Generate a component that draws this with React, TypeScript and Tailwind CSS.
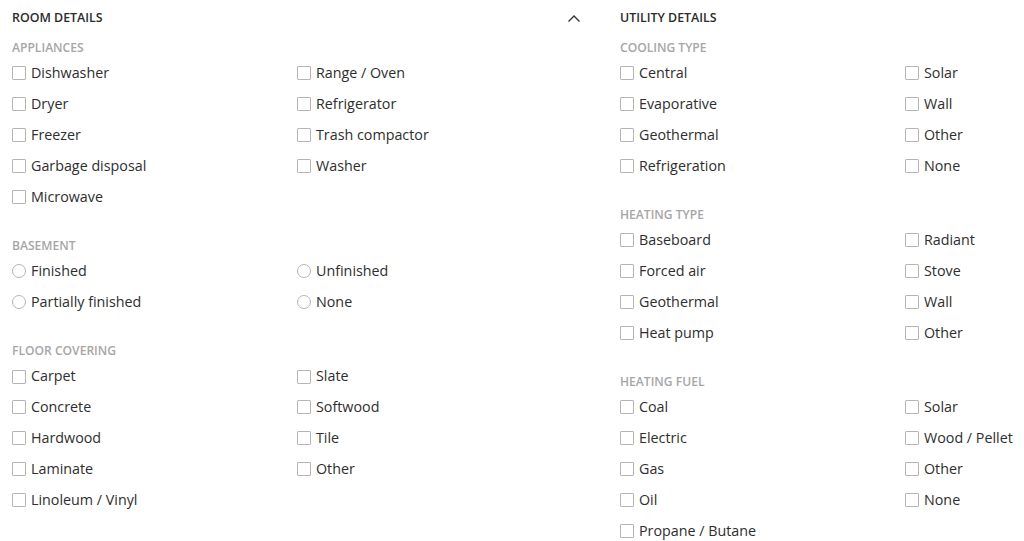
import React from "react";

const Box = ({ radio }: { radio?: boolean }) => (
  <span
    className={
      "inline-block w-[14px] h-[14px] border border-[#b5b5b5] bg-white shrink-0 " +
      (radio ? "rounded-full" : "rounded-[1px]")
    }
  />
);

const Item = ({ label, radio }: { label: string; radio?: boolean }) => (
  <div className="h-[30.85px] flex items-center gap-[5px]">
    <Box radio={radio} />
    <span className="text-[14.3px] text-[#2e2e2e] leading-none">{label}</span>
  </div>
);

const Group = ({
  title,
  left,
  right,
  radio,
  first,
}: {
  title: string;
  left: string[];
  right: string[];
  radio?: boolean;
  first?: boolean;
}) => (
  <div className={first ? "" : "mt-[23.6px]"}>
    <div className="h-[20px] flex items-center text-[12.1px] font-semibold text-[#a6a6a6]">
      {title}
    </div>
    <div className="flex">
      <div className="w-[285px] shrink-0 flex flex-col">
        {left.map((l) => (
          <Item key={l} label={l} radio={radio} />
        ))}
      </div>
      <div className="w-[285px] shrink-0 flex flex-col">
        {right.map((l) => (
          <Item key={l} label={l} radio={radio} />
        ))}
      </div>
    </div>
  </div>
);

export default function App() {
  return (
    <div
      className="w-[1024px] h-[541px] overflow-hidden bg-white flex pt-[8.5px] pl-[12px] gap-[38px]"
      style={{ fontFamily: '"Open Sans", sans-serif' }}
    >
      <div className="w-[570px] shrink-0">
        <div className="h-[20px] flex items-center justify-between mb-[9.5px]">
          <span className="text-[12.4px] font-semibold text-[#2b2b2b]">ROOM DETAILS</span>
          <svg width="14" height="9" viewBox="0 0 14 9" className="mr-[1px]">
            <polyline points="1.5,7.5 7,2 12.5,7.5" fill="none" stroke="#333" strokeWidth="1.4" />
          </svg>
        </div>
        <Group
          first
          title="APPLIANCES"
          left={["Dishwasher", "Dryer", "Freezer", "Garbage disposal", "Microwave"]}
          right={["Range / Oven", "Refrigerator", "Trash compactor", "Washer"]}
        />
        <Group
          radio
          title="BASEMENT"
          left={["Finished", "Partially finished"]}
          right={["Unfinished", "None"]}
        />
        <Group
          title="FLOOR COVERING"
          left={["Carpet", "Concrete", "Hardwood", "Laminate", "Linoleum / Vinyl"]}
          right={["Slate", "Softwood", "Tile", "Other"]}
        />
      </div>
      <div className="w-[570px] shrink-0">
        <div className="h-[20px] flex items-center mb-[9.5px]">
          <span className="text-[12.4px] font-semibold text-[#2b2b2b]">UTILITY DETAILS</span>
        </div>
        <Group
          first
          title="COOLING TYPE"
          left={["Central", "Evaporative", "Geothermal", "Refrigeration"]}
          right={["Solar", "Wall", "Other", "None"]}
        />
        <Group
          title="HEATING TYPE"
          left={["Baseboard", "Forced air", "Geothermal", "Heat pump"]}
          right={["Radiant", "Stove", "Wall", "Other"]}
        />
        <Group
          title="HEATING FUEL"
          left={["Coal", "Electric", "Gas", "Oil", "Propane / Butane"]}
          right={["Solar", "Wood / Pellet", "Other", "None"]}
        />
      </div>
    </div>
  );
}
